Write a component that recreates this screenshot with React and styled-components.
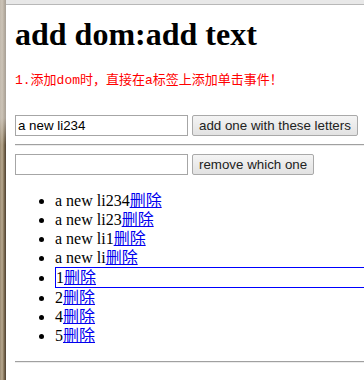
import React from "react";
import styled, { createGlobalStyle } from "styled-components";

const GlobalStyle = createGlobalStyle`
  html, body {
    margin: 0;
    padding: 0;
    background: #ffffff;
    overflow: hidden;
  }
`;

const Window = styled.div`
  display: flex;
  width: 364px;
  height: 380px;
  overflow: hidden;
`;

const LeftEdge = styled.div`
  flex: 0 0 6px;
  background:
    linear-gradient(to bottom, rgba(215, 210, 204, 0.65) 0, rgba(215, 210, 204, 0.65) 118px, rgba(215, 210, 204, 0) 145px),
    linear-gradient(to right, #9a8a72 0, #b9aa90 35%, #7b6a50 70%, #4c4032 100%);
`;

const Main = styled.div`
  flex: 1;
  display: flex;
  flex-direction: column;
  min-width: 0;
`;

const TopBar = styled.div`
  height: 4px;
  background: #e8e8e8;
  border-bottom: 1px solid #b8b8b8;
`;

const Content = styled.div`
  display: flex;
  flex-direction: column;
  padding-left: 9px;
  width: 420px;
  font-family: "Liberation Serif", "Noto Sans CJK SC", serif;
  color: #000;
`;

const Title = styled.h1`
  margin: 11px 0 0;
  font-family: "Liberation Serif", serif;
  font-weight: bold;
  font-size: 32px;
  line-height: 37px;
`;

const Note = styled.p`
  margin: 20px 0 0;
  font-family: "Liberation Mono", "Noto Sans CJK SC", monospace;
  font-size: 13px;
  line-height: 16px;
  color: #ff0000;
`;

const Row = styled.div`
  display: flex;
  align-items: center;
  gap: 4px;
  margin-top: ${(p) => p.$top}px;
`;

const TextInput = styled.input`
  box-sizing: border-box;
  width: 173px;
  height: 21px;
  margin: 0;
  padding: 1px 2px;
  border: 1px solid #a6a6a6;
  font-family: "Liberation Sans", Arial, sans-serif;
  font-size: 13.33px;
  color: #000;
  outline: none;
`;

const Button = styled.button`
  box-sizing: border-box;
  height: 21px;
  margin: 0;
  padding: 0 6px;
  border: 1px solid #a9a9a9;
  border-radius: 2px;
  background: linear-gradient(to bottom, #f4f4f4, #e2e2e2);
  font-family: "Liberation Sans", Arial, sans-serif;
  font-size: 13.33px;
  color: #222;
`;

const Rule = styled.hr`
  margin: ${(p) => p.$top}px 0 0;
  height: 0;
  border: none;
  border-top: 1px solid #a0a0a0;
  border-bottom: 1px solid #ececec;
`;

const List = styled.ul`
  margin: 16px 0 0;
  padding-left: 40px;
  list-style: disc;
  font-size: 16px;
  line-height: 19px;
`;

const Item = styled.li`
  border: ${(p) => (p.$active ? "1px solid #0000ff" : "none")};
`;

const Link = styled.a`
  color: #0000ee;
  text-decoration: underline;
  cursor: pointer;
`;

const items = ["a new li234", "a new li23", "a new li1", "a new li", "1", "2", "4", "5"];

export default function App() {
  return (
    <>
      <GlobalStyle />
      <Window>
        <LeftEdge />
        <Main>
          <TopBar />
          <Content>
            <Title>add dom:add text</Title>
            <Note>1.添加dom时，直接在a标签上添加单击事件！</Note>
            <Row $top={26}>
              <TextInput defaultValue="a new li234" />
              <Button>add one with these letters</Button>
            </Row>
            <Rule $top={8} />
            <Row $top={8}>
              <TextInput defaultValue="" />
              <Button>remove which one</Button>
            </Row>
            <List>
              {items.map((t, i) => (
                <Item key={i} $active={t === "1"}>
                  {t}
                  <Link href="#">删除</Link>
                </Item>
              ))}
            </List>
            <Rule $top={16} />
          </Content>
        </Main>
      </Window>
    </>
  );
}
